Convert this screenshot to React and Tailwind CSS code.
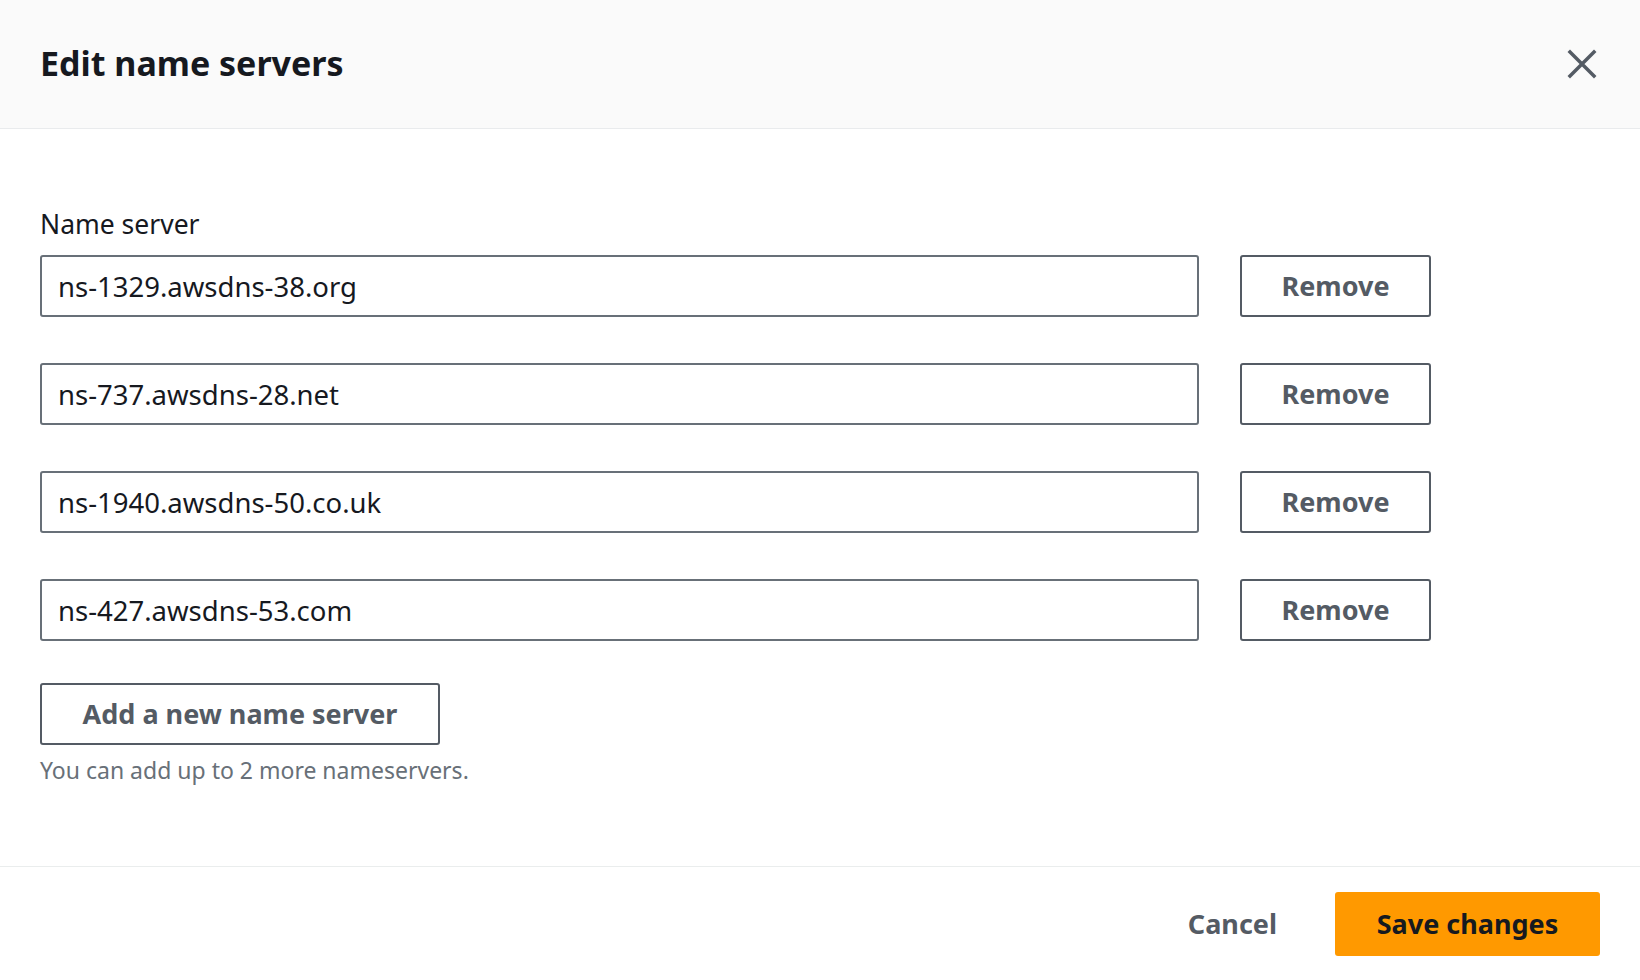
const servers = [
    'ns-1329.awsdns-38.org',
    'ns-737.awsdns-28.net',
    'ns-1940.awsdns-50.co.uk',
    'ns-427.awsdns-53.com',
];

const font = { fontFamily: '"Noto Sans", "Open Sans", Arial, sans-serif' };

const CloseIcon = () => (
    <svg width="30" height="30" viewBox="0 0 30 30" fill="none">
        <path d="M3 3L27 27M27 3L3 27" stroke="#545b64" strokeWidth="3.5" strokeLinecap="square" />
    </svg>
);

const App = () => {
    return (
        <div className="h-screen w-full flex flex-col bg-white text-[#16191f]" style={font}>
            <div className="h-[129px] shrink-0 flex items-center justify-between px-10 bg-[#fafafa] border-b border-[#e9ebed]">
                <h1 className="text-[34px] font-bold leading-none -mt-[2px]">Edit name servers</h1>
                <button className="w-[30px] h-[30px] flex items-center justify-center mr-[3px]">
                    <CloseIcon />
                </button>
            </div>

            <div className="flex-1 px-10 pt-[78px]">
                <div className="text-[26.5px] leading-[34px] mb-[14px]">Name server</div>
                <div className="flex flex-col gap-[46px]">
                    {servers.map((s) => (
                        <div key={s} className="flex items-center gap-[41px]">
                            <input
                                defaultValue={s}
                                className="w-[1159px] h-[62px] px-[16px] text-[27.5px] text-[#16191f] border-2 border-[#687078] rounded-[3px] outline-none bg-white"
                            />
                            <button className="w-[191px] h-[62px] border-2 border-[#545b64] rounded-[3px] text-[27px] font-bold text-[#545b64] bg-white">
                                Remove
                            </button>
                        </div>
                    ))}
                </div>
                <button className="mt-[42px] w-[400px] h-[62px] border-2 border-[#545b64] rounded-[3px] text-[27px] font-bold text-[#545b64] bg-white">
                    Add a new name server
                </button>
                <div className="mt-[10px] text-[23px] leading-[30px] text-[#687078]">You can add up to 2 more nameservers.</div>
            </div>

            <div className="shrink-0 border-t border-[#eaeded] pt-[25px] pb-[24px] px-10 flex items-center justify-end gap-[58px]">
                <button className="text-[27px] font-bold text-[#545b64]">Cancel</button>
                <button className="w-[265px] h-[64px] rounded-[3px] bg-[#ff9900] text-[27px] font-bold text-[#16191f]">
                    Save changes
                </button>
            </div>
        </div>
    );
};

export default App;
